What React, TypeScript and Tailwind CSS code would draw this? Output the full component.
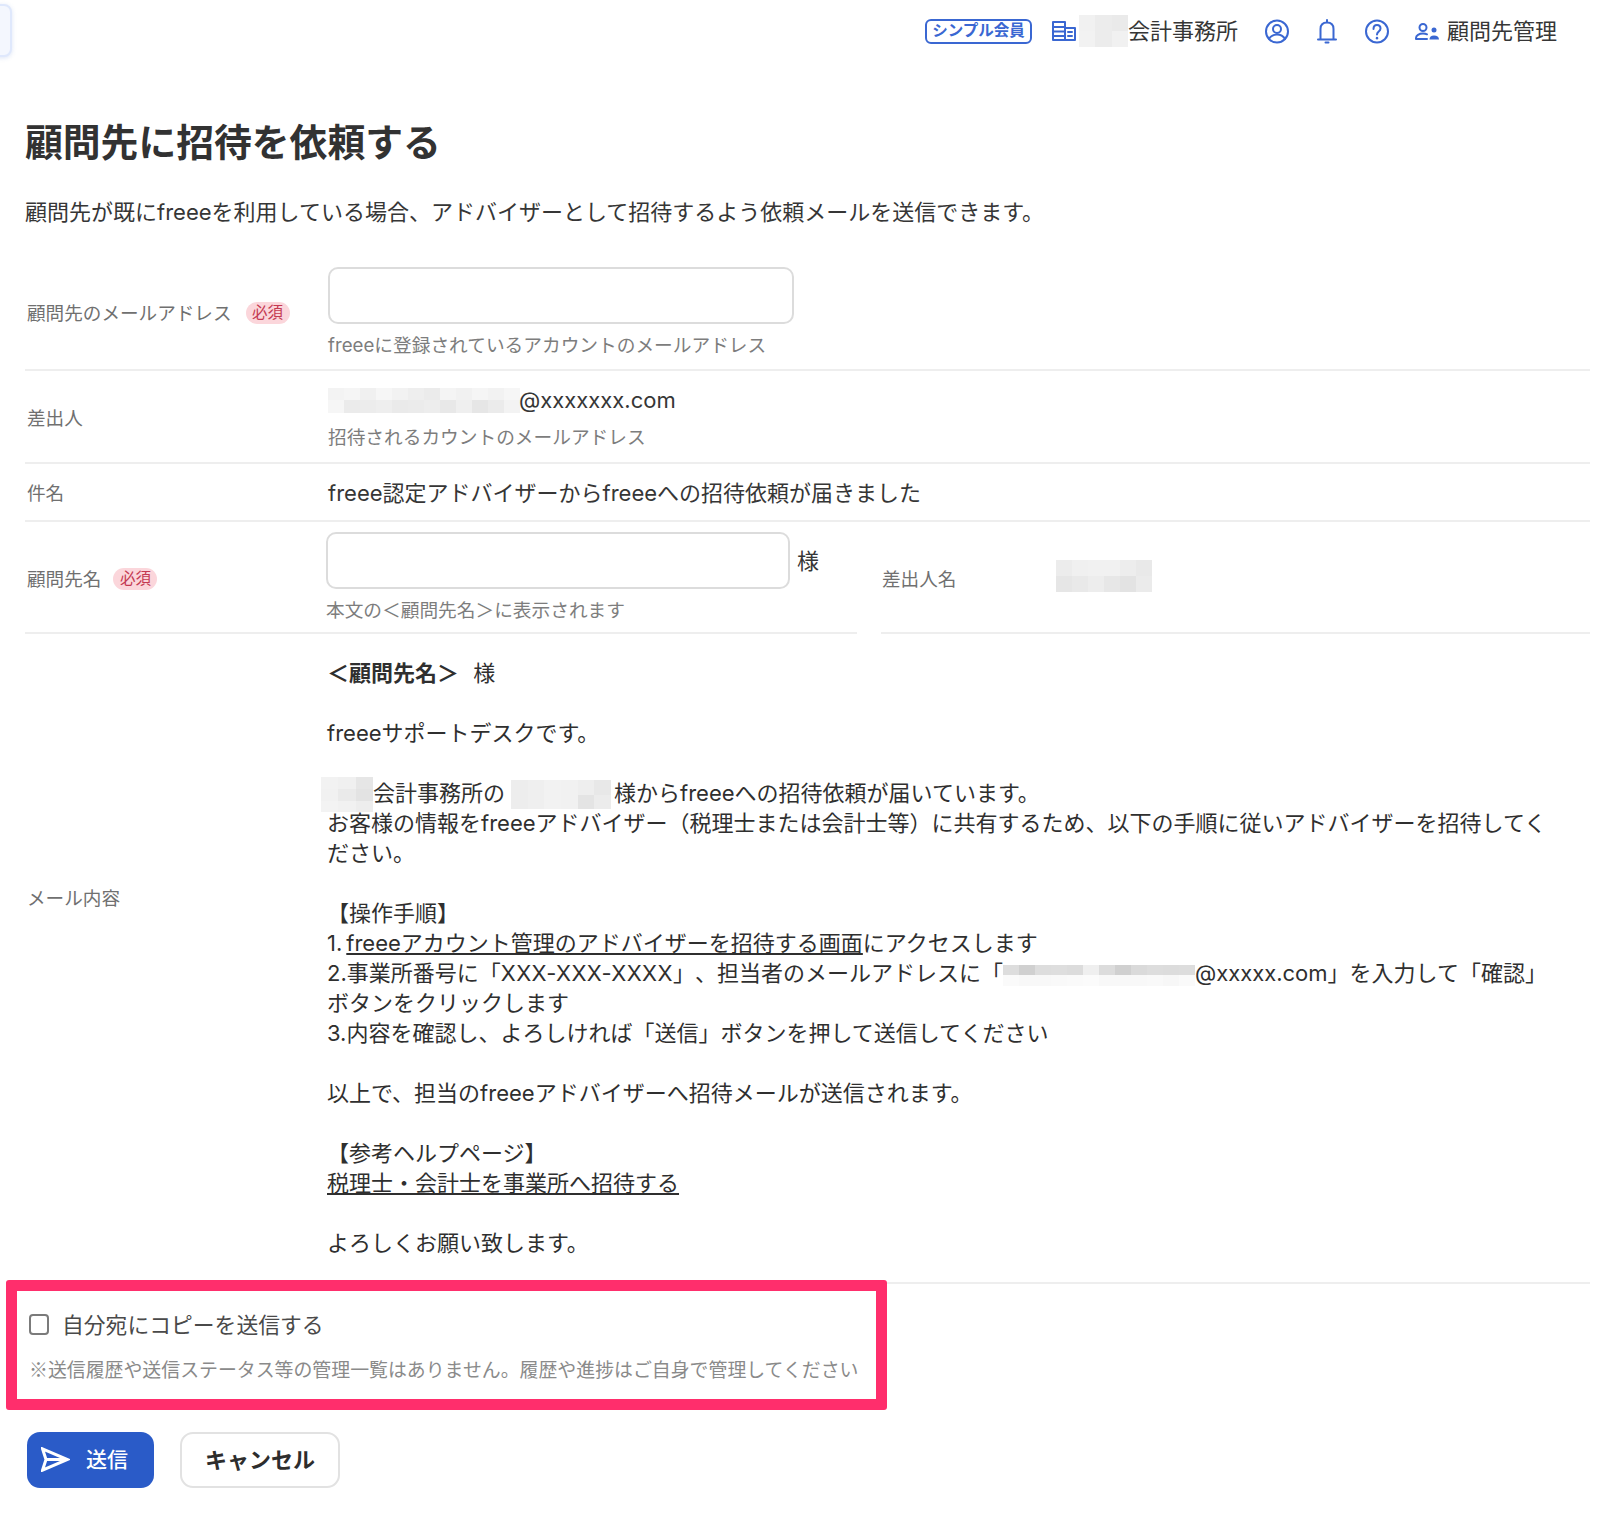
import React from "react";

const g = (s: string) => s.split(" ").map((v) => "#" + v);

function Mosaic({ cols, colors, className }: { cols: number; colors: string[]; className: string }) {
  return (
    <span
      className={"inline-grid align-middle " + className}
      style={{ gridTemplateColumns: `repeat(${cols}, 1fr)` }}
    >
      {colors.map((c, i) => (
        <span key={i} style={{ backgroundColor: c }} />
      ))}
    </span>
  );
}

function Req() {
  return (
    <span className="inline-flex h-[22px] w-[44px] items-center justify-center rounded-full bg-[#fbd6db] text-[15.5px] text-[#c43a52]">
      必須
    </span>
  );
}

const rowBorder = "border-b-2 border-[#eeeeee]";
const label = "text-[18.6px] leading-[26px] text-[#707070]";
const help = "text-[18.7px] leading-[26px] text-[#7d7d7d]";
const inputCls = "block h-[57px] rounded-[10px] border-2 border-[#dcdcdc] bg-white";

function Blue({ children, w, h, vb }: { children: React.ReactNode; w: number; h: number; vb: string }) {
  return (
    <svg width={w} height={h} viewBox={vb} fill="none" stroke="#3a67d2" strokeWidth="2" strokeLinejoin="round" strokeLinecap="round" className="shrink-0">
      {children}
    </svg>
  );
}

export default function App() {
  return (
    <div className="relative h-[1522px] w-[1602px] overflow-hidden bg-white pl-[25px] pr-[12px] font-['Inter','Noto_Sans_CJK_JP',sans-serif] text-[22px] leading-[30px] text-[#363636]">
      <div className="absolute left-[-20px] top-[4px] h-[53px] w-[32px] rounded-[8px] border-2 border-[#dfe8fc] bg-[#f4f7fe] shadow-[0_1px_4px_rgba(120,150,220,0.25)]" />

      <header className="flex h-[62px] items-center justify-end pr-[33px]">
        <span className="flex h-[25px] w-[107px] items-center justify-center rounded-[6px] border-2 border-[#3a67d2] text-[15.5px] font-bold text-[#3a67d2]">
          シンプル会員
        </span>
        <span className="ml-[20px]">
          <Blue w={24} h={20} vb="0 0 24 20">
            <path d="M1 1h12v18H1zM13 7h10v12H13zM1 6h12M1 10.5h12M1 15h12M16 11h4M16 15h4" />
          </Blue>
        </span>
        <Mosaic cols={3} colors={g("f1f1f1 ececec eaeaea f2f2f2 ececec f1f1f1")} className="ml-[3px] h-[32px] w-[49px]" />
        <span className="mb-[1px]">会計事務所</span>
        <span className="ml-[27px]">
          <Blue w={24} h={25} vb="0 0 24 25">
            <circle cx="12" cy="12.5" r="11" />
            <circle cx="12" cy="10" r="4" />
            <path d="M4 20c2-3.5 5-4.5 8-4.5s6 1 8 4.5" />
          </Blue>
        </span>
        <span className="ml-[28px]">
          <Blue w={20} h={25} vb="0 0 20 25">
            <path d="M1 20.5h18M3.5 20.5V10c0-4 2.5-6.500 6.500-6.500s6.500 2.500 6.500 6.500v10.500M10 1v2.500M8.500 23.500h3" />
          </Blue>
        </span>
        <span className="ml-[28px]">
          <Blue w={24} h={25} vb="0 0 24 25">
            <circle cx="12" cy="12.5" r="11" />
            <path d="M8.500 10c0-2.500 1.500-4 3.500-4s3.500 1.500 3.500 3.500c0 3-3.500 3-3.500 6" />
            <path d="M12 19v.2" strokeWidth="2.500" />
          </Blue>
        </span>
        <span className="ml-[26px]">
          <Blue w={25} h={17} vb="0 0 25 17">
            <circle cx="8" cy="4.500" r="3.500" />
            <path d="M1 16v-1c0-2.500 3-4.500 7-4.500 1.500 0 3 .3 4 .8M1 16h11" />
            <circle cx="19" cy="7" r="2.500" fill="#3a67d2" stroke="none" />
            <path d="M14.500 16.500c0-2.500 1.500-4 4.500-4s5 1.500 5 4z" fill="#3a67d2" stroke="none" />
          </Blue>
        </span>
        <span className="mb-[1px] ml-[7px]">顧問先管理</span>
      </header>

      <h1 className="mt-[55px] text-[37.8px] font-bold leading-[50px] text-[#323232]">顧問先に招待を依頼する</h1>
      <p className="mt-[30px] h-[30px]">顧問先が既にfreeeを利用している場合、アドバイザーとして招待するよう依頼メールを送信できます。</p>

      <section className={"mt-[40px] grid grid-cols-[303px_1fr] items-center pb-[10px] " + rowBorder}>
        <div className={"flex items-center pl-[2px] " + label}>
          <span>顧問先のメールアドレス</span>
          <span className="ml-[14px] flex"><Req /></span>
        </div>
        <div>
          <div className={inputCls + " w-[466px]"} />
          <div className={"mt-[9px] " + help}>freeeに登録されているアカウントのメールアドレス</div>
        </div>
      </section>

      <section className={"grid grid-cols-[303px_1fr] items-center pb-[11px] pt-[14px] " + rowBorder}>
        <div className={"pl-[2px] " + label}>差出人</div>
        <div>
          <div className="flex h-[30px] items-center">
            <Mosaic
              cols={12}
              colors={g("f3f3f3 f5f5f5 f0f0f0 f6f6f6 f2f2f2 eeeeee ebebeb f4f4f4 f1f1f1 f5f5f5 f2f2f2 f6f6f6 f6f6f6 ebebeb ececec eeeeee eaeaea ebebeb ededed e8e8e8 efefef e6e6e6 ebebeb f3f3f3")}
              className="h-[25px] w-[192px]"
            />
            <span className="ml-[-1px]">@xxxxxxx.com</span>
          </div>
          <div className={"mt-[10px] " + help}>招待されるカウントのメールアドレス</div>
        </div>
      </section>

      <section className={"grid grid-cols-[303px_1fr] items-center pb-[12px] pt-[14px] " + rowBorder}>
        <div className={"pl-[2px] " + label}>件名</div>
        <div>freee認定アドバイザーからfreeeへの招待依頼が届きました</div>
      </section>

      <section className="flex gap-[24px]">
        <div className={"flex w-[832px] items-center pb-[8px] pt-[10px] " + rowBorder}>
          <div className={"flex w-[301px] items-center pl-[2px] pt-[1px] " + label}>
            <span>顧問先名</span>
            <span className="ml-[12px] flex"><Req /></span>
          </div>
          <div>
            <div className="flex items-start">
              <div className={inputCls + " w-[464px]"} />
              <span className="ml-[7px] mt-[14px]">様</span>
            </div>
            <div className={"mt-[9px] " + help}>本文の＜顧問先名＞に表示されます</div>
          </div>
        </div>
        <div className={"flex flex-1 items-center pb-[8px] pt-[10px] " + rowBorder}>
          <span className={"w-[175px] pl-[1px] pt-[2px] " + label}>差出人名</span>
          <Mosaic cols={6} colors={g("ececec f0f0f0 f1f1f1 f1f1f1 ededed e9e9e9 e6e6e6 e9e9e9 ededed e7e7e7 e3e3e3 ebebeb")} className="mb-[4px] h-[32px] w-[96px]" />
        </div>
      </section>

      <section className={"grid grid-cols-[302px_1fr] items-start pb-[23px] pt-[25px] " + rowBorder}>
        <div className={"mt-[226px] pl-[2px] " + label}>メール内容</div>
        <div className="w-[1222px] text-[#2f2f2f] leading-[29.95px] [text-spacing-trim:space-all]">
          <div><b className="font-bold">＜顧問先名＞</b> <span className="ml-[8px]">様</span></div>
          <div className="h-[29.95px]" />
          <div>freeeサポートデスクです。</div>
          <div className="h-[29.95px]" />
          <div>
            <Mosaic cols={3} colors={g("f2f2f2 f0f0f0 e6e6e6 f1f1f1 eaeaea e3e3e3 f3f3f3 f1f1f1 ededed")} className="my-[-3px] ml-[-6px] h-[35px] w-[52px]" />
            会計事務所の
            <Mosaic cols={6} colors={g("ededed efefef f2f2f2 f1f1f1 eeeeee e8e8e8 ededed efefef f2f2f2 f1f1f1 e4e4e4 ececec")} className="my-[-3px] ml-[6px] mr-[3px] h-[29px] w-[100px]" />
            様からfreeeへの招待依頼が届いています。
          </div>
          <div>お客様の情報をfreeeアドバイザー（税理士または会計士等）に共有するため、以下の手順に従いアドバイザーを招待してください。</div>
          <div className="h-[29.95px]" />
          <div>【操作手順】</div>
          <div>1.<span className="ml-[4px] underline">freeeアカウント管理のアドバイザーを招待する画面</span>にアクセスします</div>
          <div>
            2.事業所番号に「<span className="tracking-[0.4px]">XXX-XXX-XXXX</span>」、担当者のメールアドレスに「
            <Mosaic
              cols={12}
              colors={g("dddddd d0d0d0 dddddd dedede dcdcdc efefef dcdcdc d0d0d0 dadada dddddd dcdcdc dddddd fafafa f8f8f8 f8f8f8 f9f9f9 fafafa fbfbfb f8f8f8 f8f8f8 f8f8f8 f9f9f9 f7f7f7 fafafa")}
              className="my-[-3px] h-[21px] w-[192px]"
            />
            @xxxxx.com」を入力して「確認」ボタンをクリックします
          </div>
          <div>3.内容を確認し、よろしければ「送信」ボタンを押して送信してください</div>
          <div className="h-[29.95px]" />
          <div>以上で、担当のfreeeアドバイザーへ招待メールが送信されます。</div>
          <div className="h-[29.95px]" />
          <div>【参考ヘルプページ】</div>
          <div className="underline">税理士・会計士を事業所へ招待する</div>
          <div className="h-[29.95px]" />
          <div>よろしくお願い致します。</div>
        </div>
      </section>

      <div className="relative ml-[-19px] mt-[-4px] h-[130px] w-[881px] rounded-[3px] border-[11px] border-[#ff2e6c] bg-white pl-[12px] pt-[23px]">
        <label className="flex h-[22px] items-center">
          <span className="h-[21px] w-[20px] rounded-[4px] border-2 border-[#7b7b7b] bg-white" />
          <span className="ml-[13px] text-[21.8px] text-[#4a4a4a]">自分宛にコピーを送信する</span>
        </label>
        <p className="mt-[21px] font-['Noto_Sans_CJK_JP',sans-serif] text-[18.9px] leading-[24px] text-[#8a8a8a]">
          ※送信履歴や送信ステータス等の管理一覧はありません。履歴や進捗はご自身で管理してください
        </p>
      </div>

      <div className="ml-[2px] mt-[22px] flex gap-[26px]">
        <button className="flex h-[56px] w-[127px] items-center rounded-[13px] bg-[#2a5bc8] pl-[14px] text-[21px] font-medium text-white">
          <svg width="29" height="25" viewBox="0 0 29 25" fill="none" stroke="white" strokeWidth="3" strokeLinejoin="miter">
            <path d="M1.500 1.800 26.500 12.500 1.500 23.200 5 12.500zM5 12.500h21" />
          </svg>
          <span className="ml-[16px]">送信</span>
        </button>
        <button className="h-[56px] w-[160px] rounded-[13px] border-2 border-[#e2e2e2] bg-white text-[22px] font-bold text-[#2d2d2d]">
          キャンセル
        </button>
      </div>
    </div>
  );
}
